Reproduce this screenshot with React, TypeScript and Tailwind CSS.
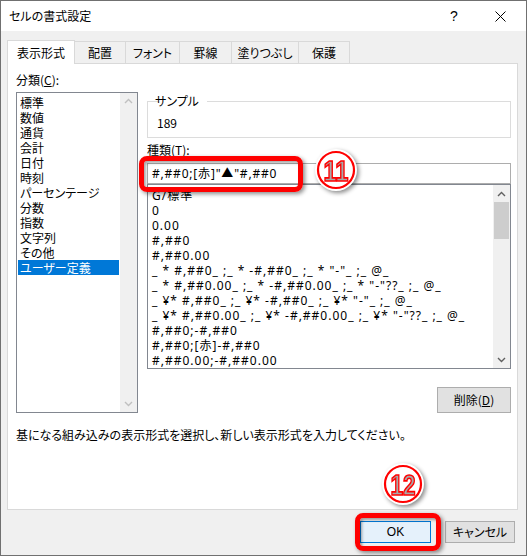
import React from "react";

const categories = [
  "標準",
  "数値",
  "通貨",
  "会計",
  "日付",
  "時刻",
  "パーセンテージ",
  "分数",
  "指数",
  "文字列",
  "その他",
  "ユーザー定義",
];

const formats = [
  "G/標準",
  "0",
  "0.00",
  "#,##0",
  "#,##0.00",
  '_ * #,##0_ ;_ * -#,##0_ ;_ * "-"_ ;_ @_',
  '_ * #,##0.00_ ;_ * -#,##0.00_ ;_ * "-"??_ ;_ @_',
  '_ ¥* #,##0_ ;_ ¥* -#,##0_ ;_ ¥* "-"_ ;_ @_',
  '_ ¥* #,##0.00_ ;_ ¥* -#,##0.00_ ;_ ¥* "-"??_ ;_ @_',
  "#,##0;-#,##0",
  "#,##0;[赤]-#,##0",
  "#,##0.00;-#,##0.00",
];

const tabs = [
  { label: "配置", w: "w-[51px]" },
  { label: "フォント", w: "w-[54px]" },
  { label: "罫線", w: "w-[52px]" },
  { label: "塗りつぶし", w: "w-[67px]" },
  { label: "保護", w: "w-[51px]" },
];

function Chevron({ up, color }: { up: boolean; color: string }) {
  return (
    <svg width="9" height="6" viewBox="0 0 9 6">
      <path
        d={up ? "M1 5 L4.5 1.5 L8 5" : "M1 1 L4.5 4.5 L8 1"}
        fill="none"
        stroke={color}
        strokeWidth="1.4"
      />
    </svg>
  );
}

function Circled({ n }: { n: string }) {
  return (
    <svg width="44" height="44" viewBox="0 0 44 44">
      <circle cx="22" cy="22" r="21" fill="#ffffff" />
      <circle cx="22" cy="22" r="18" fill="#ffffff" stroke="#ff0000" strokeWidth="2.2" />
      <text
        x="22"
        y="32.5"
        textAnchor="middle"
        fontFamily="'Liberation Sans', Arial, sans-serif"
        fontWeight="bold"
        fontSize="30"
        fill="#a8a8a8"
        stroke="#ff0000"
        strokeWidth="1.7"
        textLength="25"
        lengthAdjust="spacingAndGlyphs"
      >
        {n}
      </text>
    </svg>
  );
}

export default function App() {
  return (
    <div className="relative w-[527px] h-[556px] bg-[#f0f0f0] border border-[#707070] flex flex-col text-[12px] text-black font-['Noto_Sans_CJK_JP',sans-serif] [font-feature-settings:'palt'] leading-[16px] overflow-hidden">
      {/* Title bar */}
      <div className="h-[30px] bg-white flex items-center justify-between">
        <span className="pl-[8px] text-[12px]">セルの書式設定</span>
        <div className="flex pr-[3px] h-full">
          <div className="w-[46px] flex items-center justify-center text-[14px] font-['Liberation_Sans',sans-serif]">
            ?
          </div>
          <div className="w-[46px] flex items-center justify-center">
            <svg width="11" height="11" viewBox="0 0 11 11">
              <path d="M0.5 0.5 L10.5 10.5 M10.5 0.5 L0.5 10.5" stroke="#000" strokeWidth="1" />
            </svg>
          </div>
        </div>
      </div>

      {/* Tabs */}
      <div className="flex items-end h-[23px] mt-[9px] pl-[6px]">
        <div className="relative z-10 w-[68px] h-[24px] -mb-[1px] bg-white border-l border-t border-r border-[#d9d9d9] flex items-center justify-center">
          表示形式
        </div>
        {tabs.map((t) => (
          <div
            key={t.label}
            className={`${t.w} h-[22px] bg-[#f0f0f0] border-t border-r border-[#d9d9d9] flex items-center justify-center`}
          >
            {t.label}
          </div>
        ))}
      </div>

      {/* Panel */}
      <div className="ml-[6px] w-[511px] h-[447px] bg-white border border-[#d9d9d9] pt-[8px] pl-[8px]">
        <div className="flex items-start">
          {/* Left column */}
          <div className="w-[122px] flex flex-col">
            <div className="h-[16px]">
              分類(<span className="underline">C</span>):
            </div>
            <div className="mt-[4px] h-[321px] border border-[#828790] flex">
              <div className="flex-1 pt-[2px] px-[1px]">
                {categories.map((c) => (
                  <div
                    key={c}
                    className={`h-[15px] leading-[15px] pl-[2px] ${
                      c === "ユーザー定義" ? "bg-[#0078d7] text-white" : ""
                    }`}
                  >
                    {c}
                  </div>
                ))}
              </div>
              <div className="w-[17px] bg-[#f0f0f0] flex flex-col items-center justify-between py-[5px]">
                <Chevron up color="#c0c0c0" />
                <Chevron up={false} color="#c0c0c0" />
              </div>
            </div>
          </div>

          {/* Right column */}
          <div className="ml-[9px] w-[364px] flex flex-col">
            <fieldset className="mt-[21px] h-[45px] border border-[#dcdcdc] pl-[9px]">
              <legend className="ml-[2px] px-[2px] -translate-x-[6px] leading-[16px]">サンプル</legend>
              <div className="pt-[6px]">189</div>
            </fieldset>
            <div className="mt-[4px] h-[16px]">
              種類(<span className="underline">T</span>):
            </div>
            <div className="mt-[5px] h-[21px] border border-[#adadad] flex items-center pl-[4px] font-['Noto_Sans','Noto_Sans_CJK_JP',sans-serif] tracking-[0.8px]">
              #,##0;[赤]"▲"#,##0
            </div>
            <div className="h-[185px] border border-[#828790] flex">
              <div className="flex-1 pt-[3px] pl-[4px] overflow-hidden whitespace-nowrap font-['Noto_Sans','Noto_Sans_CJK_JP',sans-serif] tracking-[1px]">
                {formats.map((f, i) => (
                  <div key={i} className="h-[15px] leading-[15px]">
                    {f}
                  </div>
                ))}
              </div>
              <div className="w-[17px] bg-[#f0f0f0] flex flex-col items-center">
                <div className="h-[17px] flex items-center justify-center">
                  <Chevron up color="#606060" />
                </div>
                <div className="w-[15px] h-[37px] bg-[#cdcdcd]" />
                <div className="flex-1" />
                <div className="h-[17px] flex items-center justify-center">
                  <Chevron up={false} color="#606060" />
                </div>
              </div>
            </div>
            <div className="mt-[18px] self-end w-[74px] h-[26px] bg-[#e1e1e1] border border-[#adadad] flex items-center justify-center">
              削除(<span className="underline">D</span>)
            </div>
          </div>
        </div>
        <div className="mt-[14px] h-[16px]">
          基になる組み込みの表示形式を選択し、新しい表示形式を入力してください。
        </div>
      </div>

      {/* Bottom buttons */}
      <div className="mt-[11px] flex justify-end pr-[11px] gap-[14px]">
        <div className="w-[71px] h-[22px] bg-[#e5f1fb] border border-[#0078d7] flex items-center justify-center font-['Liberation_Sans',sans-serif]">
          OK
        </div>
        <div className="w-[70px] h-[22px] bg-[#e1e1e1] border border-[#adadad] flex items-center justify-center">
          キャンセル
        </div>
      </div>

      {/* Annotations */}
      <div className="absolute left-[138px] top-[155px] w-[164px] h-[36px] border-[5px] border-[#ff0000] rounded-[8px] shadow-[2px_2px_4px_rgba(0,0,0,0.45),inset_2px_2px_3px_rgba(0,0,0,0.35)]" />
      <div className="absolute left-[313px] top-[147px] drop-shadow-[2px_2px_2px_rgba(0,0,0,0.45)]">
        <Circled n="11" />
      </div>
      <div className="absolute left-[354px] top-[512px] w-[86px] h-[38px] border-[5px] border-[#ff0000] rounded-[8px] shadow-[2px_2px_4px_rgba(0,0,0,0.45),inset_2px_2px_3px_rgba(0,0,0,0.35)]" />
      <div className="absolute left-[380px] top-[461px] drop-shadow-[2px_2px_2px_rgba(0,0,0,0.45)]">
        <Circled n="12" />
      </div>
    </div>
  );
}
